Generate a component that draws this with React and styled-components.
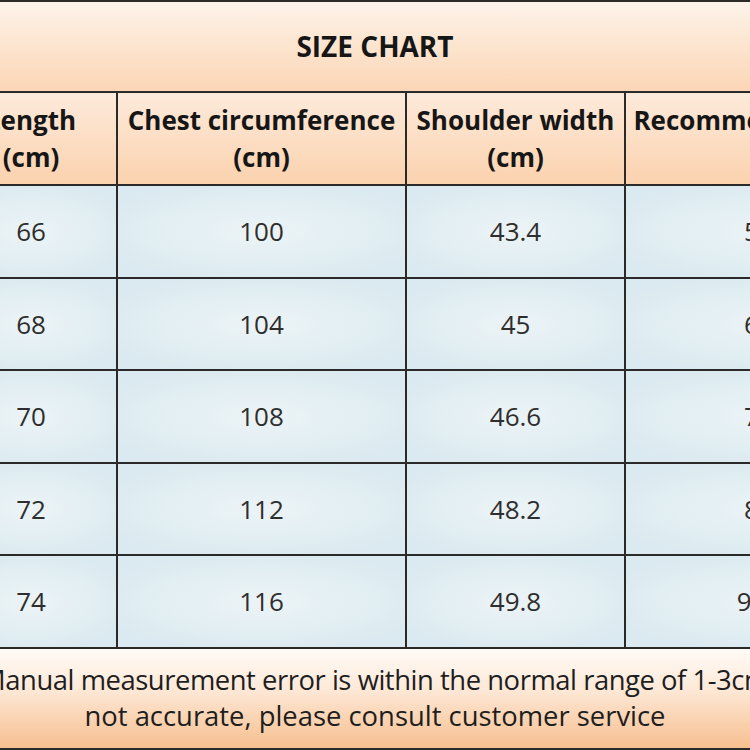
import React from 'react';
import styled, { createGlobalStyle } from 'styled-components';

const GlobalStyle = createGlobalStyle`
  html, body {
    margin: 0;
    padding: 0;
    background: #ffffff;
  }
  body {
    font-family: "Open Sans", "Noto Sans", "Noto Sans CJK SC", sans-serif;
  }
`;

const Viewport = styled.div`
  width: 750px;
  height: 750px;
  overflow: hidden;
`;

const Chart = styled.div`
  width: 1110px;
  margin-left: -180px;
  display: grid;
  grid-template-columns: 124px 170px 287px 217px 304px;
  grid-template-rows: 89px 91px repeat(5, 90.5px) 99.5px;
  gap: 2px;
  padding: 2px 0;
  background: #2c2a28;
`;

const TitleCell = styled.div`
  grid-column: 1 / -1;
  display: flex;
  align-items: center;
  justify-content: center;
  background: linear-gradient(180deg, #fdf3ea 0%, #fce3cc 55%, #fbd6b6 100%);
  font-size: 28px;
  font-weight: 700;
  color: #161616;
  padding-bottom: 2px;
`;

const HeadCell = styled.div`
  display: flex;
  flex-direction: column;
  align-items: center;
  justify-content: center;
  background: linear-gradient(180deg, #fdeadb 0%, #fcdcc0 60%, #fbd2ae 100%);
  font-size: 26px;
  font-weight: 700;
  line-height: 37px;
  color: #161616;
  white-space: nowrap;
  padding-bottom: ${p => (p.single ? '37px' : '0')};
`;

const DataCell = styled.div`
  display: flex;
  align-items: center;
  justify-content: center;
  background: radial-gradient(ellipse 60% 55% at 50% 50%, #ecf3f6 0%, #e3eff3 55%, #dbeaf0 100%);
  font-size: 26px;
  color: #2e2e2e;
`;

const Note = styled.div`
  grid-column: 1 / -1;
  display: flex;
  flex-direction: column;
  align-items: center;
  justify-content: center;
  background: linear-gradient(180deg, #fffbf7 0%, #fde9d8 40%, #f9cda7 80%, #f6bf90 100%);
  font-size: 27.4px;
  line-height: 36px;
  color: #1e1e1e;
  white-space: nowrap;
`;

const NoteLine = styled.span`
  letter-spacing: ${p => (p.tight ? '-0.45px' : '0')};
`;

const headers = [
  ['Size'],
  ['Length', '(cm)'],
  ['Chest circumference', '(cm)'],
  ['Shoulder width', '(cm)'],
  ['Recommended weight', '(kg)'],
];

const rows = [
  ['S', '66', '100', '43.4', '50-60'],
  ['M', '68', '104', '45', '60-70'],
  ['L', '70', '108', '46.6', '70-80'],
  ['XL', '72', '112', '48.2', '80-90'],
  ['XXL', '74', '116', '49.8', '90-100'],
];

export default function App() {
  return (
    <>
      <GlobalStyle />
      <Viewport>
        <Chart>
          <TitleCell>SIZE CHART</TitleCell>
          {headers.map((lines, i) => (
            <HeadCell key={i} single={lines.length === 1}>
              {lines.map(l => (
                <span key={l}>{l}</span>
              ))}
            </HeadCell>
          ))}
          {rows.map((row, r) =>
            row.map((value, c) => <DataCell key={`${r}-${c}`}>{value}</DataCell>)
          )}
          <Note>
            <NoteLine tight>Manual measurement error is within the normal range of 1-3cm</NoteLine>
            <NoteLine>not accurate, please consult customer service</NoteLine>
          </Note>
        </Chart>
      </Viewport>
    </>
  );
}
